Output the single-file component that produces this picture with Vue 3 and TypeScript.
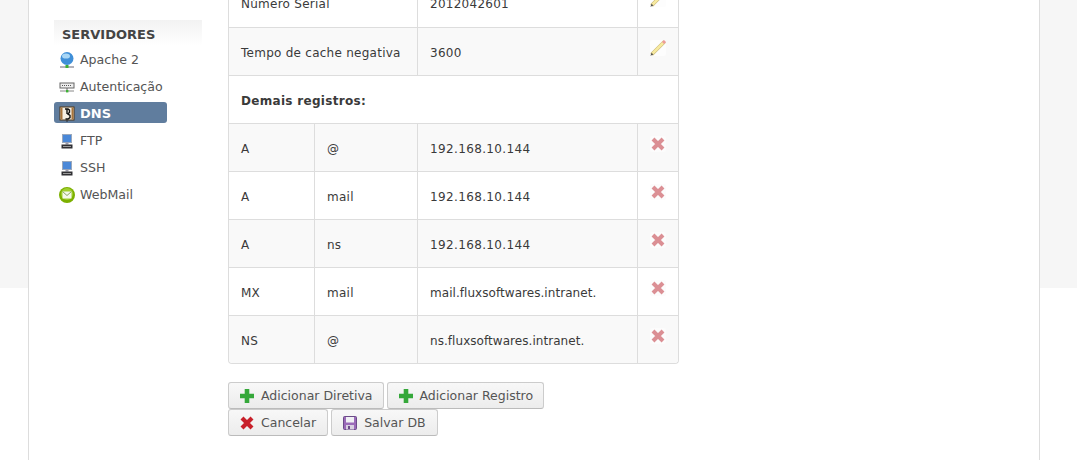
<script setup lang="ts">
type Item = { label: string; icon: string; active?: boolean };
const items: Item[] = [
  { label: 'Apache 2', icon: 'globe' },
  { label: 'Autenticação', icon: 'net' },
  { label: 'DNS', icon: 'book', active: true },
  { label: 'FTP', icon: 'pc' },
  { label: 'SSH', icon: 'pc' },
  { label: 'WebMail', icon: 'mail' },
];
const records = [
  { t: 'A', n: '@', v: '192.168.10.144', ip: true },
  { t: 'A', n: 'mail', v: '192.168.10.144', ip: true },
  { t: 'A', n: 'ns', v: '192.168.10.144', ip: true },
  { t: 'MX', n: 'mail', v: 'mail.fluxsoftwares.intranet.', ip: false },
  { t: 'NS', n: '@', v: 'ns.fluxsoftwares.intranet.', ip: false },
];
</script>

<template>
  <div class="page">
    <div class="band"></div>
    <main class="shell">
      <aside class="side">
        <h3 class="side-title">SERVIDORES</h3>
        <ul class="menu">
          <li v-for="it in items" :key="it.label" class="menu-item" :class="{ active: it.active }">
            <svg class="mi" viewBox="0 0 16 16" width="16" height="16">
              <template v-if="it.icon === 'globe'">
                <circle cx="8" cy="6.5" r="6.5" fill="#3f8fd8" />
                <ellipse cx="7" cy="4" rx="4" ry="2.6" fill="#a8d6f5" />
                <path d="M1 15h14" stroke="#667" stroke-width="1" />
                <rect x="6.5" y="13" width="3" height="3" fill="#3cb034" />
              </template>
              <template v-else-if="it.icon === 'net'">
                <rect x="1" y="4" width="14" height="5" fill="#eee" stroke="#666" />
                <path d="M3 6.5h10" stroke="#555" stroke-dasharray="1 1" />
                <path d="M1 12h14" stroke="#888" />
                <path d="M8 9v2" stroke="#666" />
                <rect x="7" y="11" width="2.4" height="2.4" fill="#3cb034" />
              </template>
              <template v-else-if="it.icon === 'book'">
                <rect x="1" y="1" width="14" height="13" fill="#f5f0e4" stroke="#4a3418" />
                <rect x="1.5" y="1.5" width="2" height="12" fill="#a8743a" />
                <rect x="12.5" y="1.5" width="2" height="12" fill="#a8743a" />
                <path d="M6 3h3l1.5 1.2v2L9 8l2 1.4v2.2L9 13H6.5M8 3.5V8" fill="none" stroke="#111" stroke-width="1.4" />
                <path d="M8 14v2" stroke="#333" />
              </template>
              <template v-else-if="it.icon === 'pc'">
                <rect x="3.5" y="1.5" width="9" height="8" fill="#4a88d8" stroke="#9aa8bc" />
                <rect x="6.5" y="9.5" width="3" height="2" fill="#99a" />
                <rect x="2.5" y="11.5" width="11" height="4" fill="#303034" />
                <path d="M4 13.5h8" stroke="#999" />
              </template>
              <template v-else>
                <circle cx="8" cy="8" r="8" fill="#7cb000" />
                <circle cx="8" cy="7" r="6" fill="#a0cf30" />
                <rect x="3.5" y="4.5" width="9" height="7" fill="#f4f8ea" />
                <path d="M3.5 4.5 8 8.5l4.5-4" fill="none" stroke="#8aa860" />
              </template>
            </svg>
            <span>{{ it.label }}</span>
          </li>
        </ul>
      </aside>

      <section class="content">
        <table class="grid">
          <colgroup>
            <col class="c1" /><col class="c2" /><col class="c3" /><col class="c4" />
          </colgroup>
          <tbody>
            <tr class="short">
              <td colspan="2">Número Serial</td>
              <td>2012042601</td>
              <td class="act">
                <svg class="ai" viewBox="0 0 16 16" width="16" height="16"><rect width="16" height="16" rx="2" fill="#fdfdfd" /><path d="M1.6 14.4 14.6 1.4" stroke="#c9b878" stroke-width="3.6" /><path d="M2.2 13.8 14 2" stroke="#f7ea9f" stroke-width="2.5" /><path d="M13 3 15 1" stroke="#ee9a9a" stroke-width="2.8" /><path d="M.4 15.8l1.2-3 1.8 1.8z" fill="#555" /></svg>
              </td>
            </tr>
            <tr class="odd">
              <td colspan="2">Tempo de cache negativa</td>
              <td>3600</td>
              <td class="act">
                <svg class="ai" viewBox="0 0 16 16" width="16" height="16"><rect width="16" height="16" rx="2" fill="#fdfdfd" /><path d="M1.6 14.4 14.6 1.4" stroke="#c9b878" stroke-width="3.6" /><path d="M2.2 13.8 14 2" stroke="#f7ea9f" stroke-width="2.5" /><path d="M13 3 15 1" stroke="#ee9a9a" stroke-width="2.8" /><path d="M.4 15.8l1.2-3 1.8 1.8z" fill="#555" /></svg>
              </td>
            </tr>
            <tr>
              <td colspan="4" class="head">Demais registros:</td>
            </tr>
            <tr v-for="(r, i) in records" :key="i" :class="{ odd: i % 2 === 0 }">
              <td>{{ r.t }}</td>
              <td>{{ r.n }}</td>
              <td :class="r.ip ? 'ip' : 'host'">{{ r.v }}</td>
              <td class="act">
                <svg class="ai" viewBox="0 0 16 16" width="16" height="16"><rect width="16" height="16" rx="2" fill="#fcfcfc" /><path d="M3 3l10 10M13 3 3 13" stroke="#db8f94" stroke-width="4" /></svg>
              </td>
            </tr>
          </tbody>
        </table>

        <div class="btn-row first">
          <button class="btn tight">
            <svg class="bi" viewBox="0 0 16 16" width="16" height="16"><path d="M7 1v14M0 8h14" stroke="#35a83a" stroke-width="4.6" /></svg>Adicionar Diretiva
          </button>
          <button class="btn tight">
            <svg class="bi" viewBox="0 0 16 16" width="16" height="16"><path d="M7 1v14M0 8h14" stroke="#35a83a" stroke-width="4.6" /></svg>Adicionar Registro
          </button>
        </div>
        <div class="btn-row">
          <button class="btn">
            <svg class="bi" viewBox="0 0 16 16" width="16" height="16"><path d="M2 3l10 10M12 3 2 13" stroke="#c8202a" stroke-width="4.2" /></svg>Cancelar
          </button>
          <button class="btn">
            <svg class="bi" viewBox="0 0 16 16" width="16" height="16"><rect x=".5" y="1.5" width="13" height="13" rx="1" fill="#9a6ab8" stroke="#6b4a88" /><rect x="3" y="2" width="8" height="5.5" fill="#f0f0f4" /><rect x="3" y="10" width="8" height="4.5" fill="#d8d0e0" /><rect x="5" y="11" width="2" height="3" fill="#6b4a88" /></svg>Salvar DB
          </button>
        </div>
      </section>
    </main>
  </div>
</template>

<style>
html, body { margin: 0; background: #fff; overflow: hidden; }
</style>

<style scoped>
.page {
  position: relative;
  width: 1077px;
  height: 460px;
  overflow: hidden;
  font-family: "DejaVu Sans", sans-serif;
  font-size: 12px;
  color: #333;
}
.band {
  position: absolute;
  left: 0;
  right: 0;
  top: 0;
  height: 288px;
  background: #f6f6f6;
}
.shell {
  position: relative;
  box-sizing: border-box;
  width: 1012px;
  height: 460px;
  margin-left: 28px;
  background: #fff;
  border-left: 1px solid #ddd;
  border-right: 1px solid #ddd;
  display: flex;
  padding-left: 25px;
}
.side { width: 148px; margin-right: 26px; padding-top: 20px; flex: none; }
.side-title {
  margin: 0;
  height: 25px;
  line-height: 30px;
  padding-left: 8px;
  font-size: 13px;
  font-weight: bold;
  color: #444;
  background: linear-gradient(#f2f2f2, #fff);
}
.menu { list-style: none; margin: 0; padding: 0; }
.menu-item {
  display: flex;
  align-items: center;
  width: 113px;
  height: 21px;
  margin-bottom: 6px;
  padding: 2px 0 0 5px;
  box-sizing: border-box;
  border-radius: 3px;
  color: #555;
  font-size: 12.6px;
  white-space: nowrap;
}
.menu-item:first-child { margin-top: 3px; }
.menu-item .mi { margin-right: 5px; flex: none; }
.menu-item.active { background: #607d9e; color: #fff; font-weight: bold; font-size: 13px; }
.content { width: 451px; margin-top: -21px; flex: none; }
.grid {
  width: 451px;
  table-layout: fixed;
  border-collapse: separate;
  border-spacing: 0;
  border: 1px solid #ddd;
  border-radius: 4px;
  border-top: 0;
  box-sizing: border-box;
  background: #fff;
}
.c1 { width: 85px; }
.c2 { width: 103px; }
.c3 { width: 220px; }
.c4 { width: 41px; }
.grid td {
  box-sizing: border-box;
  height: 48px;
  padding: 2px 12px 0;
  border-top: 1px solid #ddd;
  border-left: 1px solid #ddd;
  white-space: nowrap;
  color: #3a3a3a;
  letter-spacing: 0.26px;
}
.grid td:first-child { border-left: 0; }
.grid tr:first-child td { border-top: 0; }
.grid tr.odd td { background: #f9f9f9; }
.grid tr:last-child td:first-child { border-bottom-left-radius: 4px; }
.grid tr:last-child td:last-child { border-bottom-right-radius: 4px; }
.grid td.head { font-weight: bold; letter-spacing: 0.3px; }
.grid td.ip { letter-spacing: 0.36px; }
.grid td.host { letter-spacing: 0.05px; }
.grid td.act { padding: 0 0 8px 12px; }
.ai { display: block; }
.btn-row { display: flex; gap: 3px; }
.btn-row.first { margin-top: 18px; }
.btn {
  display: flex;
  align-items: center;
  box-sizing: border-box;
  height: 27px;
  padding: 0 11px;
  border: 1px solid #ccc;
  border-bottom-color: #bbb;
  border-radius: 3px;
  background: linear-gradient(#f8f8f8, #ececec);
  color: #555;
  font: 12.5px "DejaVu Sans", sans-serif;
  white-space: nowrap;
}
.btn.tight { padding-right: 10px; }
.bi { margin-right: 5px; flex: none; }
</style>
